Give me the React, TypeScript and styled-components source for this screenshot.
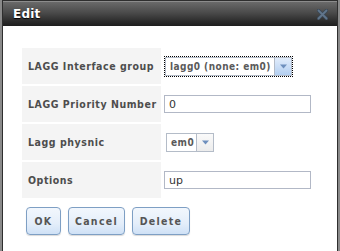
import React from "react";
import styled, { createGlobalStyle } from "styled-components";

const Global = createGlobalStyle`
  html, body { margin: 0; padding: 0; background: #8a8a8a; }
  body { font-family: "DejaVu Sans", Verdana, sans-serif; }
  * { box-sizing: border-box; }
`;

const Dialog = styled.div`
  margin-left: 2px;
  width: 336px;
  height: 251px;
  border: 1px solid #2e2e2e;
  border-bottom: none;
  background: #fff;
  display: flex;
  flex-direction: column;
`;

const TitleBar = styled.div`
  height: 25px;
  flex: none;
  display: flex;
  align-items: center;
  justify-content: space-between;
  padding: 0 9px 0 10px;
  background: linear-gradient(#6a6a6a 0%, #4a4a4a 45%, #2c2c2c 80%, #1e1e1e 100%);
  border-top: 1px solid #8c8c8c;
`;

const Title = styled.span`
  color: #fff;
  font-weight: bold;
  font-size: 12px;
  letter-spacing: 0.2px;
  text-shadow: 0 1px 1px #000;
`;

const Body = styled.div`
  padding: 22px 0 0 19px;
  display: flex;
  flex-direction: column;
`;

const Rows = styled.div`
  display: flex;
  flex-direction: column;
  gap: 2px;
`;

const Row = styled.div`
  display: grid;
  grid-template-columns: 139px 160px;
  column-gap: 2px;
  height: 36px;
`;

const Label = styled.div`
  background: #f4f4f4;
  display: flex;
  align-items: center;
  padding-left: 6px;
  font-family: "DejaVu Sans Condensed", "DejaVu Sans", sans-serif;
  font-stretch: condensed;
  font-weight: bold;
  font-size: 10.5px;
  letter-spacing: 0.55px;
  color: #4d4d4d;
  white-space: nowrap;
`;

const Field = styled.div`
  display: flex;
  align-items: center;
  padding-left: 1px;
`;

const SelectBox = styled.div<{ $w: number; $focus?: boolean }>`
  width: ${(p) => p.$w}px;
  height: 19px;
  display: flex;
  border: 1px solid #b4bcc8;
  background: #fff;
  outline: ${(p) => (p.$focus ? "1px dotted #000" : "none")};
  outline-offset: 0px;
  margin-left: ${(p) => (p.$focus ? "1px" : "2px")};
`;

const SelectText = styled.div`
  flex: 1;
  padding-left: 4px;
  display: flex;
  align-items: center;
  font-family: "DejaVu Sans Condensed", "DejaVu Sans", sans-serif;
  font-stretch: condensed;
  font-size: 10px;
  font-weight: bold;
  letter-spacing: 0.45px;
  color: #5a5a5a;
  white-space: nowrap;
  overflow: hidden;
`;

const Arrow = styled.div<{ $active?: boolean }>`
  width: 17px;
  flex: none;
  border-left: 1px solid #b4bcc8;
  background: ${(p) =>
    p.$active ? "linear-gradient(#e2edfb, #b3cff1)" : "linear-gradient(#fafafa, #ececec)"};
  display: flex;
  align-items: center;
  justify-content: center;
`;

const Input = styled.div`
  width: 147px;
  height: 18px;
  border: 1px solid #b2b8c6;
  display: flex;
  align-items: center;
  padding-left: 4px;
  font-size: 11px;
  color: #333;
`;

const Buttons = styled.div`
  display: flex;
  gap: 7px;
  margin-top: 9px;
  padding-left: 4px;
`;

const Button = styled.button<{ $w: number }>`
  width: ${(p) => p.$w}px;
  height: 28px;
  padding: 0;
  border: 1px solid #7e9fc4;
  border-radius: 4px;
  background: linear-gradient(#f2f7fd 0%, #e4eefa 60%, #cfe1f6 100%);
  box-shadow: 0 1px 1px rgba(0, 0, 0, 0.15);
  font-family: "DejaVu Sans Condensed", "DejaVu Sans", sans-serif;
  font-stretch: condensed;
  font-weight: bold;
  font-size: 10.5px;
  letter-spacing: 1.3px;
  color: #555;
`;

const Tri = () => (
  <svg width="9" height="5" viewBox="0 0 9 5">
    <path d="M1 0.5 L8 0.5 L4.5 4.5 Z" fill="#6e8fbd" />
  </svg>
);

const CloseIcon = () => (
  <svg width="11" height="11" viewBox="0 0 11 11">
    <path d="M1.5 1.5 L9.5 9.5 M9.5 1.5 L1.5 9.5" stroke="#3a4754" strokeWidth="3.4" strokeLinecap="round" />
    <path d="M1.5 1.5 L9.5 9.5 M9.5 1.5 L1.5 9.5" stroke="#60758b" strokeWidth="1.8" strokeLinecap="round" />
  </svg>
);

export default function App() {
  return (
    <>
      <Global />
      <Dialog>
        <TitleBar>
          <Title>Edit</Title>
          <CloseIcon />
        </TitleBar>
        <Body>
          <Rows>
            <Row>
              <Label>LAGG Interface group</Label>
              <Field>
                <SelectBox $w={127} $focus>
                  <SelectText>lagg0 (none: em0)</SelectText>
                  <Arrow $active>
                    <Tri />
                  </Arrow>
                </SelectBox>
              </Field>
            </Row>
            <Row>
              <Label>LAGG Priority Number</Label>
              <Field>
                <Input>0</Input>
              </Field>
            </Row>
            <Row>
              <Label>Lagg physnic</Label>
              <Field>
                <SelectBox $w={48}>
                  <SelectText>em0</SelectText>
                  <Arrow>
                    <Tri />
                  </Arrow>
                </SelectBox>
              </Field>
            </Row>
            <Row>
              <Label>Options</Label>
              <Field>
                <Input>up</Input>
              </Field>
            </Row>
          </Rows>
          <Buttons>
            <Button $w={35}>OK</Button>
            <Button $w={57}>Cancel</Button>
            <Button $w={58}>Delete</Button>
          </Buttons>
        </Body>
      </Dialog>
    </>
  );
}
